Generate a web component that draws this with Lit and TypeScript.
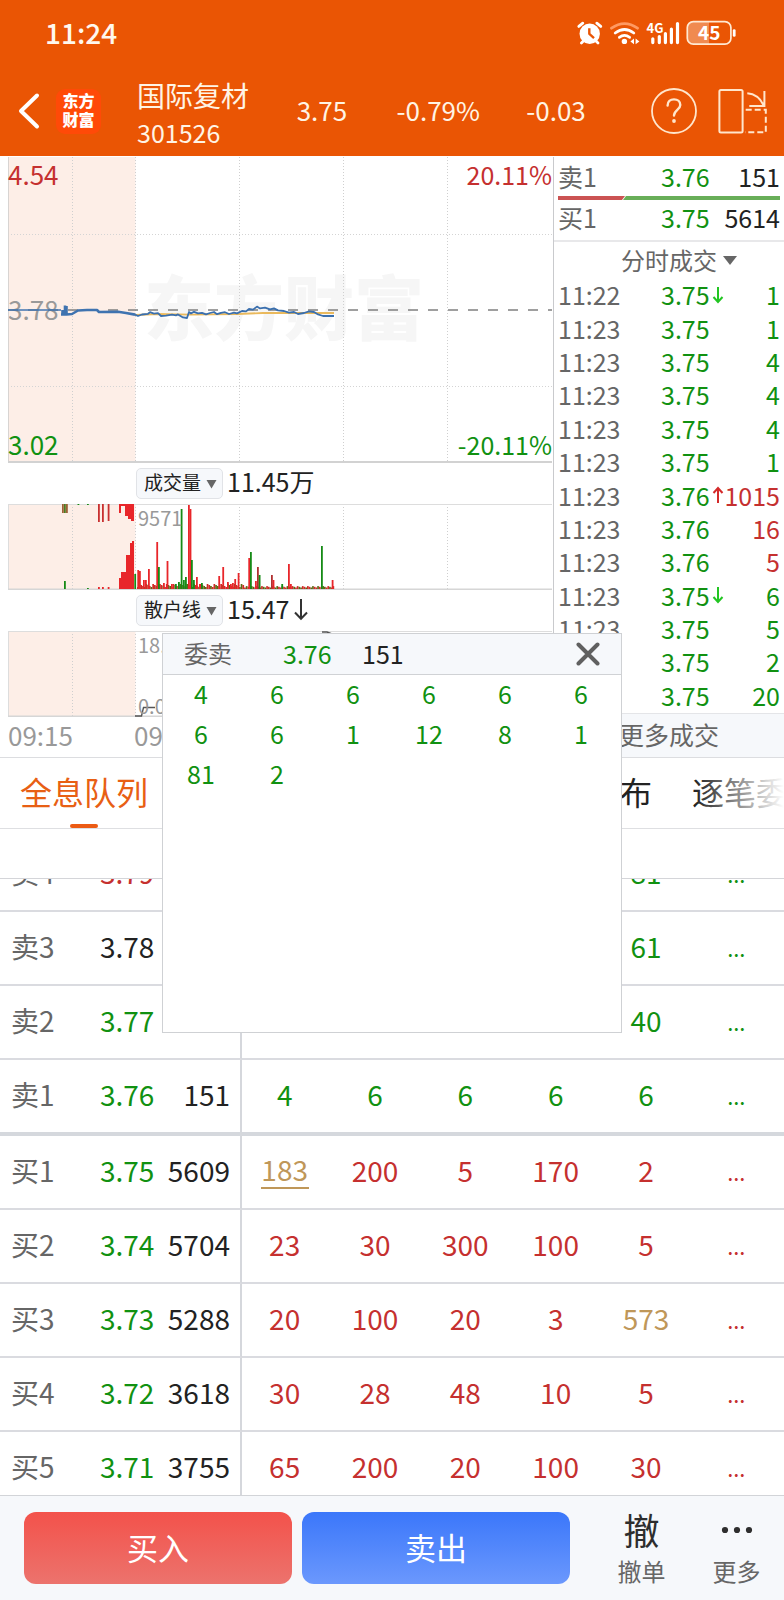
import { LitElement, html, svg, css } from "lit";
import { customElement } from "lit/decorators.js";
import { classMap } from "lit/directives/class-map.js";

type Tone = "up" | "down" | "flat" | "gold";

interface Tick {
  time: string;
  price: string;
  move?: "rise" | "fall";
  qty: string;
  tone: Tone;
}

interface Level {
  name: string;
  price: string;
  priceTone: Tone;
  total: string;
  side: Tone;
  orders: string[];
  gold?: number;
  underline?: boolean;
}

const t = (time: string, price: string, qty: string, tone: Tone = "down", move?: "rise" | "fall"): Tick => ({
  time, price, qty, tone, move,
});

const TICKS: Tick[] = [
  t("11:22", "3.75", "1", "down", "fall"),
  t("11:23", "3.75", "1"),
  t("11:23", "3.75", "4"),
  t("11:23", "3.75", "4"),
  t("11:23", "3.75", "4"),
  t("11:23", "3.75", "1"),
  t("11:23", "3.76", "1015", "up", "rise"),
  t("11:23", "3.76", "16", "up"),
  t("11:23", "3.76", "5", "up"),
  t("11:23", "3.75", "6", "down", "fall"),
  t("11:23", "3.75", "5"),
  t("11:23", "3.75", "2"),
  t("11:23", "3.75", "20"),
];

const LEVELS: Level[] = [
  { name: "卖4", price: "3.79", priceTone: "up", total: "", side: "down", orders: ["", "", "", "", "81"] },
  { name: "卖3", price: "3.78", priceTone: "flat", total: "", side: "down", orders: ["", "", "", "", "61"] },
  { name: "卖2", price: "3.77", priceTone: "down", total: "", side: "down", orders: ["", "", "", "", "40"] },
  { name: "卖1", price: "3.76", priceTone: "down", total: "151", side: "down", orders: ["4", "6", "6", "6", "6"] },
  { name: "买1", price: "3.75", priceTone: "down", total: "5609", side: "up", orders: ["183", "200", "5", "170", "2"], gold: 0, underline: true },
  { name: "买2", price: "3.74", priceTone: "down", total: "5704", side: "up", orders: ["23", "30", "300", "100", "5"] },
  { name: "买3", price: "3.73", priceTone: "down", total: "5288", side: "up", orders: ["20", "100", "20", "3", "573"], gold: 4 },
  { name: "买4", price: "3.72", priceTone: "down", total: "3618", side: "up", orders: ["30", "28", "48", "10", "5"] },
  { name: "买5", price: "3.71", priceTone: "down", total: "3755", side: "up", orders: ["65", "200", "20", "100", "30"] },
];

const QUEUE = ["4", "6", "6", "6", "6", "6", "6", "6", "1", "12", "8", "1", "81", "2"];
const TABS = ["全息队列", "千档盘口", "逐笔成交", "成交分布", "逐笔委托"];

const RED = "#e8262a";
const GREEN = "#168a16";
const BROWN = "#9c6236";

// Volume bars: x, height, colour
const BARS: [number, number, string][] = [
  [127.3, 15, GREEN], [130.3, 19, RED], [132, 18, RED], [136, 9, RED], [138, 9, RED], [141, 20, RED],
  [149.3, 47, RED], [151, 22, GREEN], [156, 6, RED], [159.6, 28, RED], [164, 5, RED], [168, 5, GREEN], [171, 7, GREEN],
  [173.7, 80, GREEN], [176, 9, GREEN], [178, 12, GREEN], [181, 84, RED], [182.6, 80, RED], [184, 29, GREEN], [186, 9, GREEN],
  [189, 12, RED], [192, 5, RED], [194, 6, GREEN], [211.3, 13, RED], [215.3, 22, RED], [220, 7, RED], [223, 5, RED],
  [225, 6, RED], [227.3, 10, RED], [230.7, 16, RED], [241.3, 31, RED], [243, 37, GREEN], [248, 8, RED],
  [250, 22, "#b03030"], [251.7, 14, GREEN], [264, 14, "#b03030"], [265.6, 9, RED], [274.3, 5, GREEN],
  [281, 25, RED], [283, 5, RED], [314, 43, GREEN], [324.7, 9, RED],
];

const CALL_BARS: [number, number, number, string][] = [
  [54, 0, 9, BROWN], [56, 0, 9, "#4e7a20"], [58, 0, 9, BROWN],
  [69.5, 0, 1, GREEN], [79, 0, 1, GREEN],
  [90, 0, 18, "#c83030"], [94, 0, 18, "#c83030"], [99.7, 0, 17, "#c83030"],
  [56, 77, 8, GREEN], [79, 84, 1, GREEN], [90, 83, 2, RED], [94, 83, 2, RED], [99.7, 83, 2, RED],
];

@customElement("app-root")
export class AppRoot extends LitElement {
  static styles = css`
    :host {
      display: flex;
      flex-direction: column;
      height: 100vh;
      background: #fff;
      color: #222;
      font-family: "Noto Sans CJK SC", "Noto Sans", sans-serif;
      font-size: 25px;
      line-height: 32px;
      overflow: hidden;
    }
    * { box-sizing: border-box; }
    svg { display: block; }
    button, select {
      font: inherit;
      color: inherit;
      margin: 0;
      padding: 0;
      border: 0;
      background: none;
      appearance: none;
      cursor: pointer;
    }
    a { color: inherit; text-decoration: none; }
    .up { color: #c5302f; }
    .down { color: #119111; }
    .flat { color: #222; }
    .gold { color: #bf9759; }

    .top { background: #ea5504; color: #fff4e4; flex: none; }
    .status {
      display: flex;
      align-items: center;
      justify-content: space-between;
      height: 68px;
      padding: 0 46px 0 45px;
      font-size: 28px;
      font-weight: 500;
      color: #fff8ee;
    }
    .clock { padding-bottom: 4px; }
    .quote {
      display: grid;
      grid-template-columns: 56px 81px 32fr 20fr 26fr 25fr 46px 70px;
      align-items: center;
      height: 88px;
      padding: 0 17px 2px 0;
      font-size: 26px;
    }
    .figure { padding-bottom: 2px; }
    .back { width: 56px; height: 48px; padding-left: 16px; }
    .logo {
      width: 45px;
      height: 45px;
      padding-top: 2px;
      border-radius: 9px;
      background: #ff4a08;
      color: #fff;
      font-size: 16px;
      line-height: 19px;
      font-weight: 900;
      text-align: center;
    }
    .title { padding-top: 4px; }
    .name { font-size: 28px; line-height: 38px; }
    .code { font-size: 25px; line-height: 36px; }
    .rotate { justify-self: end; }

    .market {
      display: grid;
      grid-template-columns: minmax(0, 1fr) 231px;
      flex: none;
      padding-top: 1px;
      border-bottom: 1px solid #dcdde0;
    }
    .charts { padding-left: 8px; }
    .plot { position: relative; margin-right: 1px; }
    .plot svg { width: 100%; }
    .price-svg { height: 306px; }
    .sub-svg { height: 86px; }
    .lines { position: absolute; left: 0; top: 0; }
    .tag { position: absolute; line-height: 32px; }
    .hi { top: 1px; }
    .mid { top: 136px; color: #999; }
    .lo { bottom: 3px; }
    .lt { left: 0; font-size: 26px; }
    .rt { right: 0; }
    .scale { left: 130px; font-size: 20px; line-height: 28px; color: #999; }
    .s-hi { top: 0; }
    .s-lo { bottom: -3px; }
    .mark {
      position: absolute;
      left: 25%;
      top: 108px;
      font-size: 70px;
      line-height: 80px;
      font-weight: 900;
      color: #f6f6f6;
      white-space: nowrap;
    }
    .indicator {
      display: flex;
      align-items: center;
      gap: 4px;
      height: 41px;
      padding-left: 128px;
    }
    .value { padding-bottom: 5px; }
    .pick { position: relative; display: flex; align-items: center; }
    .pick select {
      width: 87px;
      height: 31px;
      padding: 0 0 4px 7px;
      border: 1px solid #e1e3e7;
      border-radius: 5px;
      background: #f6f8fb;
      font-size: 19px;
      line-height: 25px;
    }
    .pick svg { position: absolute; right: 6px; pointer-events: none; }
    .axis { display: flex; gap: 61px; height: 40px; font-size: 26px; line-height: 36px; color: #999; }

    .side { display: flex; flex-direction: column; border-left: 1px solid #c9cacd; min-width: 0; }
    .best { padding: 2px 0 3px; border-bottom: 2px solid #e8e8ea; }
    .row {
      display: grid;
      grid-template-columns: 103px 51px 12px minmax(0, 1fr);
      align-items: center;
      padding: 0 4px 2px;
    }
    .best .row { line-height: 35px; height: 37px; }
    .dim { color: #666; }
    .qty { grid-column: 4; justify-self: end; white-space: nowrap; }
    .ratio { margin: 0 4px; }
    .ratio svg { width: 100%; height: 4px; }
    .tape-head {
      display: flex;
      align-items: center;
      justify-content: center;
      gap: 6px;
      height: 37px;
      padding-left: 20px;
      color: #666;
    }
    .tape-head select { width: 96px; height: 36px; padding-bottom: 2px; font-size: 24px; line-height: 34px; }
    .tape { display: flex; flex-direction: column; flex: 1; margin: 0; padding: 0; list-style: none; }
    .tape .row { flex: 1; line-height: 31px; }
    .more {
      display: block;
      height: 44px;
      line-height: 40px;
      border-top: 1px solid #e4e5e8;
      background: #f6f8fb;
      color: #666;
      text-align: center;
    }

    .lower { position: relative; display: flex; flex-direction: column; flex: 1; min-height: 0; }
    .tabs {
      display: flex;
      gap: 40px;
      flex: none;
      height: 71px;
      padding-left: 20px;
      border-bottom: 1px solid #dedfe2;
      overflow: hidden;
      position: relative;
    }
    .tabs button { position: relative; flex: none; padding-bottom: 4px; font-size: 32px; line-height: 66px; color: #222; }
    .tabs .on { color: #e85f14; }
    .tabs .on::after {
      content: "";
      position: absolute;
      left: 50%;
      bottom: 0;
      width: 28px;
      height: 4px;
      margin-left: -14px;
      border-radius: 2px;
      background: #ec5b14;
    }
    .fade {
      position: absolute;
      right: 0;
      top: 0;
      width: 90px;
      height: 69px;
      background: linear-gradient(90deg, rgba(255, 255, 255, 0), #fff);
      pointer-events: none;
    }
    .spacer { flex: none; height: 50px; border-bottom: 1px solid #d4d5d9; }
    .book { flex: 1; min-height: 0; overflow: hidden; }
    table { width: 100%; margin-top: -41px; table-layout: fixed; border-collapse: separate; border-spacing: 0; font-size: 28px; }
    .c-name { width: 100px; }
    .c-price { width: 59px; }
    .c-total { width: 83px; }
    th, td { height: 74px; padding: 0 0 4px; border-bottom: 2px solid #dadbe0; font-weight: 400; line-height: 36px; white-space: nowrap; }
    th { padding-left: 11px; text-align: left; color: #666; }
    .best-ask th, .best-ask td { height: 76px; border-bottom: 4px solid #d5d8dd; }
    .total { padding-right: 10px; text-align: right; border-right: 2px solid #d5d7dc; }
    .cell { padding-right: 5px; text-align: center; }
    .dots { font-size: 22px; }
    .own { display: inline-block; width: 48px; border-bottom: 2px solid #bf9759; }

    .popup {
      position: absolute;
      left: 162px;
      right: 162px;
      top: -125px;
      height: 400px;
      border: 1px solid #cfd1d4;
      background: #fff;
    }
    .popup-head {
      display: flex;
      align-items: center;
      height: 41px;
      padding: 0 21px;
      border-bottom: 1px solid #d0d2d5;
      background: #f6f8fb;
    }
    .popup-head span { padding-bottom: 3px; }
    .popup-head .dim { width: 99px; font-size: 24px; }
    .popup-head .down { width: 79px; }
    .close { margin-left: auto; }
    .orders {
      display: grid;
      grid-template-columns: repeat(6, minmax(0, 1fr));
      row-gap: 4px;
      padding-right: 2px;
      line-height: 36px;
      text-align: center;
    }

    .bar {
      display: flex;
      align-items: flex-start;
      flex: none;
      height: 105px;
      padding: 16px 0 0 24px;
      border-top: 1px solid #d2d4d8;
      background: #f6f8fb;
    }
    .trade { display: flex; flex: 1; gap: 10px; margin-right: 24px; }
    .trade button { flex: 1; height: 72px; padding-bottom: 3px; border-radius: 12px; color: #fff; font-size: 31px; line-height: 68px; }
    .buy { background: linear-gradient(#f3524b, #ec736d); }
    .sell { background: linear-gradient(#3b77fa, #6b98fd); }
    .tool { display: flex; flex-direction: column; align-items: center; width: 95px; font-size: 24px; line-height: 36px; color: #666; }
    .glyph { display: flex; align-items: center; height: 41px; padding-bottom: 6px; font-size: 36px; line-height: 35px; color: #2e2e2e; }
  `;

  private statusIcons() {
    return html`<svg width="162" height="28" viewBox="0 0 162 28" fill="none" aria-hidden="true">
      <circle cx="13.7" cy="13.8" r="10.2" fill="#fff" />
      <path d="M2.8 6.4 L6.8 3.2 M20.8 3.2 L24.8 6.4 M5.4 23 L8.4 20 M22 23 L19 20" stroke="#fff" stroke-width="2.8" stroke-linecap="round" />
      <path d="M13.3 8.3 V13.8 L18 18.2" stroke="#ea5504" stroke-width="2.4" />
      <path d="M35.5 8.2 Q48.5 -1 61.5 8.2" stroke="#ff9a62" stroke-width="2.8" stroke-linecap="round" />
      <path d="M39.2 13 Q48.5 6 57.8 13" stroke="#fff" stroke-width="2.8" stroke-linecap="round" />
      <path d="M43.3 17.4 Q48.5 13.4 53.7 17.4" stroke="#fff" stroke-width="2.6" stroke-linecap="round" />
      <circle cx="48.4" cy="21.4" r="2.7" fill="#fff" />
      <path d="M54.4 21.4 L58 18.6 V24.2 Z M63.4 21.4 L59.6 18.6 V24.2 Z" fill="#fff" />
      <text x="70.5" y="13" fill="#fff" font-size="13" font-weight="700">4G</text>
      <path d="M76.8 18.8 V22.6 M83.3 16.6 V22.6 M89.4 13.6 V22.6 M95.4 9 V22.6 M101.5 3.6 V22.6" stroke="#fff" stroke-width="3.2" stroke-linecap="round" />
      <path d="M133 2 H117 a5.5 5.5 0 0 0 -5.5 5.5 V18.5 a5.5 5.5 0 0 0 5.5 5.5 H133 Z" fill="#f08a50" />
      <rect x="111.3" y="1.6" width="43.6" height="22.6" rx="6" stroke="#ffe9d2" stroke-width="1.7" />
      <path d="M158.2 10.6 V15.4" stroke="#fff" stroke-width="2.8" stroke-linecap="round" />
      <text x="133.2" y="20.4" fill="#fff" font-size="19" font-weight="700" text-anchor="middle">45</text>
    </svg>`;
  }

  private header() {
    return html`<header class="top">
      <div class="status"><span class="clock">11:24</span>${this.statusIcons()}</div>
      <div class="quote">
        <button class="back" aria-label="返回">
          <svg width="26" height="48" viewBox="0 0 26 48" fill="none"><path d="M21 8.5 L5 24 L21 39.5" stroke="#fff" stroke-width="4" stroke-linecap="round" stroke-linejoin="round" /></svg>
        </button>
        <div class="logo">东方<br />财富</div>
        <div class="title"><div class="name">国际复材</div><div class="code">301526</div></div>
        <span class="figure">3.75</span><span class="figure">-0.79%</span><span class="figure">-0.03</span>
        <button aria-label="帮助">
          <svg width="46" height="46" viewBox="0 0 46 46" fill="none" stroke="#ffe6cc">
            <circle cx="23" cy="23" r="22" stroke-width="1.8" />
            <path d="M16.6 17.6 C16.6 13.6 19.3 11.4 23 11.4 C26.8 11.4 29.3 13.8 29.3 17 C29.3 21.6 23 22.4 23 27.6" stroke-width="2.4" stroke-linecap="round" />
            <circle cx="23" cy="33" r="1.9" fill="#ffe6cc" stroke="none" />
          </svg>
        </button>
        <button class="rotate" aria-label="横屏">
          <svg width="50" height="48" viewBox="0 0 50 48" fill="none" stroke="#ffe6cc" stroke-width="2">
            <rect x="2.4" y="2.9" width="23.2" height="42.6" rx="1.5" />
            <path d="M30.3 6.3 C38 7 43.5 11.5 46.6 18.4 M47.4 4 V19 H32.3" />
            <path d="M28.7 22.8 H48.8 V45.2 H28" stroke-dasharray="6 3" />
          </svg>
        </button>
      </div>
    </header>`;
  }

  private verticals(height: number) {
    return svg`<path d="M64.5 0 V${height} M127.5 0 V${height} M231.5 0 V${height} M335.5 0 V${height} M439.5 0 V${height}" stroke="#cfcfcf" stroke-dasharray="1 2" fill="none" />`;
  }

  private priceChart() {
    return html`<div class="plot">
      <svg class="price-svg" viewBox="0 0 544 306" preserveAspectRatio="none" fill="none" aria-hidden="true">
        <rect width="127.5" height="305" fill="#fdeee7" />
      </svg>
      <span class="mark">东方财富</span>
      <span class="tag mid lt">3.78</span>
      <svg class="price-svg lines" viewBox="0 0 544 306" preserveAspectRatio="none" fill="none" aria-hidden="true">
        ${this.verticals(305)}
        <path d="M0 77.5 H544 M0 229.5 H544" stroke="#d4d4d4" stroke-dasharray="1 2" />
        <path d="M0.5 0 V305" stroke="#d8d4d2" />
        <path d="M0 305 H544" stroke="#d2d2d2" stroke-width="2" />
        <path d="M0 153 H544" stroke="#808080" stroke-width="1.6" stroke-dasharray="10 10" />
        <path d="M127 158 L150 157 L182 157.6 L229 157 L255 156 L326 156" stroke="#eab95c" stroke-width="1.8" />
        <path d="M0 153 H53" stroke="#3f73b0" stroke-width="1.6" />
        <path d="M53 157.5 H57 V148.5 M54.5 153 V158 M58.5 149 V157.5 L64 157 L70 153.5 L79 153 L89 153 L91 155 L110 154.8 L118 156 L127 157.6" stroke="#3f73b0" stroke-width="2.6" stroke-linejoin="round" />
        <path d="M127 157.6 L130 159 L134 157.5 L140 156.8 L142 155.2 L146 156.6 L150 156.2 L153 159 L158 158.6 L164 157.6 L168 158.4 L170 157.4 L175 160.4 L179 161 L181 155 L183 156.4 L186 154.8 L190 156.4 L194 155.8 L198 157.4 L202 156 L206 155 L209 157.2 L213 155.8 L217 155.2 L221 157 L226 155.6 L229 156.4 L234 154 L238 154.4 L241 152 L245 152.6 L249 149.6 L252 151.4 L257 150.6 L262 152.4 L266 151.4 L270 153.4 L276 154 L281 155.6 L286 155 L290 157 L296 156 L301 154.4 L306 155 L310 157.4 L315 159 L326 159" stroke="#3a6fae" stroke-width="1.8" stroke-linejoin="round" />
      </svg>
      <span class="tag hi lt up">4.54</span>
      <span class="tag hi rt up">20.11%</span>
      <span class="tag lo lt down">3.02</span>
      <span class="tag lo rt down">-20.11%</span>
    </div>`;
  }

  private volumeChart() {
    const small = Array.from({ length: 116 }, (_, i) => i);
    return html`<div class="plot">
      <svg class="sub-svg" viewBox="0 0 544 86" preserveAspectRatio="none" fill="none" aria-hidden="true">
        <rect width="127.5" height="85" fill="#fdeee7" />
        ${this.verticals(85)}
        <path d="M0 0.5 H544 M0.5 0 V85" stroke="#dddddd" />
        <path d="M0 85.3 H544" stroke="#d6d6d6" stroke-width="1.4" />
        ${CALL_BARS.map(([x, y, h, c]) => svg`<rect x=${x} y=${y} width="1.8" height=${h} fill=${c} />`)}
        <path d="M111 0 H126 V17 H123 V15 H120 V12 H117 V2 H113 V9 H111 Z" fill="${RED}" />
        <path d="M111 85 V74 H113 V68 H118 V51 H122 V39 H124 V37 H126 V85 Z" fill="${RED}" />
        ${small.map((i) => {
          const x = 129 + i * 1.7;
          const h = x < 236 ? 2 + ((i * 7) % 4) : 1.5 + ((i * 5) % 3) * 0.7;
          return svg`<rect x=${x} y=${85 - h} width="1.7" height=${h} fill=${(i * 5) % 7 < 4 ? "#d02a26" : "#5a6a14"} />`;
        })}
        ${BARS.map(([x, h, c]) => svg`<rect x=${x - 1} y=${85 - h} width="1.8" height=${h} fill=${c} />`)}
      </svg>
      <span class="tag scale s-hi">9571</span>
    </div>`;
  }

  private retailChart() {
    return html`<div class="plot">
      <svg class="sub-svg" viewBox="0 0 544 86" preserveAspectRatio="none" fill="none" aria-hidden="true">
        <rect width="127.5" height="85" fill="#fdeee7" />
        ${this.verticals(85)}
        <path d="M0 0.5 H544 M0.5 0 V85" stroke="#dddddd" />
        <path d="M0 85.3 H544" stroke="#d6d6d6" stroke-width="1.4" />
        <path d="M127 85 H133.5 L135.5 76.5 H147 M314 1 L319 1 L324 3" stroke="#555" stroke-width="1.4" />
      </svg>
      <span class="tag scale s-hi">18.39</span>
      <span class="tag scale s-lo">0.00</span>
    </div>`;
  }

  private picker(label: string) {
    return html`<label class="pick">
      <select aria-label="副图指标"><option>${label}</option></select>
      <svg width="11" height="10" viewBox="0 0 11 10"><path d="M0.5 1 H10.5 L5.5 9.5 Z" fill="#666" /></svg>
    </label>`;
  }

  private arrow(move?: "rise" | "fall") {
    if (!move) return html`<span></span>`;
    const up = move === "rise";
    return html`<svg width="12" height="18" viewBox="0 0 12 18" fill="none" stroke=${up ? "#d42a2a" : "#22c522"} stroke-width="2">
      ${up ? svg`<path d="M6 17 V2.5 M1.5 7 L6 2 L10.5 7" />` : svg`<path d="M6 1 V15.5 M1.5 11 L6 16 L10.5 11" />`}
    </svg>`;
  }

  private side() {
    return html`<aside class="side">
      <div class="best">
        <div class="row"><span class="dim">卖1</span><span class="down">3.76</span><span class="qty">151</span></div>
        <div class="ratio">
          <svg viewBox="0 0 222 4" preserveAspectRatio="none" aria-hidden="true">
            <path d="M0 0 H67 L64 4 H0 Z" fill="#cb5353" /><path d="M68 0 H222 V4 H65 Z" fill="#68ae58" />
          </svg>
        </div>
        <div class="row"><span class="dim">买1</span><span class="down">3.75</span><span class="qty">5614</span></div>
      </div>
      <label class="tape-head">
        <select aria-label="成交明细"><option>分时成交</option></select>
        <svg width="14" height="9" viewBox="0 0 14 9"><path d="M0 0 H14 L7 9 Z" fill="#666" /></svg>
      </label>
      <ul class="tape">
        ${TICKS.map(
          (k) => html`<li class="row">
            <span class="dim">${k.time}</span><span class="down">${k.price}</span>${this.arrow(k.move)}
            <span class=${classMap({ qty: true, [k.tone]: true })}>${k.qty}</span>
          </li>`,
        )}
      </ul>
      <a class="more" href="#more">更多成交</a>
    </aside>`;
  }

  private levelRow(l: Level) {
    return html`<tr class=${classMap({ "best-ask": l.name === "卖1" })}>
      <th scope="row">${l.name}</th>
      <td class=${l.priceTone}>${l.price}</td>
      <td class="total">${l.total}</td>
      ${l.orders.map((o, i) => {
        const gold = l.gold === i;
        return html`<td class=${classMap({ cell: true, gold, [l.side]: !gold })}>
          ${gold && l.underline ? html`<span class="own">${o}</span>` : o}
        </td>`;
      })}
      <td class=${classMap({ cell: true, [l.side]: true })}><span class="dots">...</span></td>
    </tr>`;
  }

  private popup() {
    return html`<section class="popup" role="dialog" aria-label="委卖">
      <div class="popup-head">
        <span class="dim">委卖</span><span class="down">3.76</span><span>151</span>
        <button class="close" aria-label="关闭">
          <svg width="24" height="24" viewBox="0 0 24 24"><path d="M2.5 2.5 L21.5 21.5 M21.5 2.5 L2.5 21.5" stroke="#606060" stroke-width="4" stroke-linecap="round" /></svg>
        </button>
      </div>
      <div class="orders">${QUEUE.map((q) => html`<span class="down">${q}</span>`)}</div>
    </section>`;
  }

  render() {
    return html`
      ${this.header()}
      <section class="market">
        <div class="charts">
          ${this.priceChart()}
          <div class="indicator">${this.picker("成交量")}<span class="value">11.45万</span></div>
          ${this.volumeChart()}
          <div class="indicator">
            ${this.picker("散户线")}<span class="value">15.47</span>
            <svg width="16" height="28" viewBox="0 0 16 28" fill="none"><path d="M8 2 V21.5 M2 15.5 L8 21.8 L14 15.5" stroke="#333" stroke-width="2" /></svg>
          </div>
          ${this.retailChart()}
          <div class="axis"><span>09:15</span><span>09:30</span></div>
        </div>
        ${this.side()}
      </section>
      <main class="lower">
        <nav class="tabs">
          ${TABS.map((name, i) => html`<button class=${classMap({ on: i === 0 })}>${name}</button>`)}
          <span class="fade"></span>
        </nav>
        <div class="spacer"></div>
        <div class="book">
          <table>
            <colgroup><col class="c-name" /><col class="c-price" /><col class="c-total" /><col /><col /><col /><col /><col /><col /></colgroup>
            <tbody>${LEVELS.map((l) => this.levelRow(l))}</tbody>
          </table>
        </div>
        ${this.popup()}
      </main>
      <footer class="bar">
        <div class="trade"><button class="buy">买入</button><button class="sell">卖出</button></div>
        <button class="tool"><span class="glyph">撤</span>撤单</button>
        <button class="tool">
          <span class="glyph"><svg width="32" height="8" viewBox="0 0 32 8" fill="#2e2e2e"><circle cx="4" cy="4" r="3.1" /><circle cx="16" cy="4" r="3.1" /><circle cx="28" cy="4" r="3.1" /></svg></span>更多
        </button>
      </footer>
    `;
  }
}
